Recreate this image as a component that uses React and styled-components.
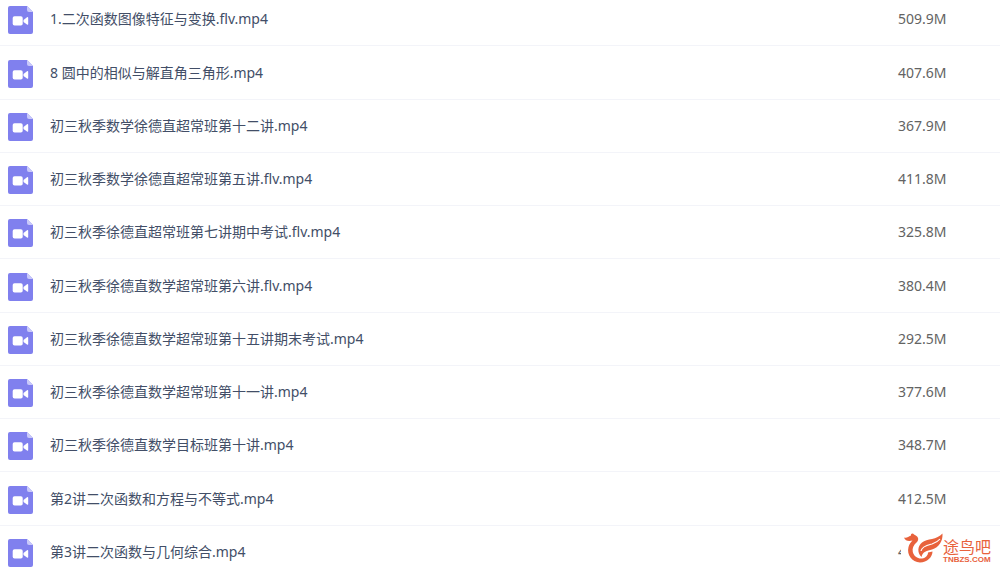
import React from 'react';

import styled, { createGlobalStyle } from 'styled-components';

const GlobalStyle = createGlobalStyle`
    body {
        margin: 0;
        background-color: #ffffff;
        font-family: "Noto Sans", "Noto Sans CJK SC", sans-serif;
        font-size: 14px;
    }
`

const Page = styled.main`
    position: relative;
    height: 100vh;
    overflow: hidden;
`

const FileList = styled.ul`
    margin: -7px 0 0;
    padding: 0;
    list-style: none;
`

const Row = styled.li`
    display: flex;
    align-items: center;
    box-sizing: border-box;
    height: 53px;
    padding: 0 8px;
    border-bottom: 1px solid #f3f4f9;

    &:nth-child(4n + 2) {
        height: 54px;
    }
`

const Icon = styled.svg`
    flex: none;
    width: 25px;
    height: 28px;
    margin: 2px 17px 0 0;
`

const Name = styled.span`
    flex: 1;
    line-height: 20px;
    color: #424e67;
    white-space: nowrap;
`

const Size = styled.span`
    width: 94px;
    line-height: 20px;
    color: #636363;
`

const Watermark = styled.div`
    position: absolute;
    right: 4px;
    bottom: 0;
    display: flex;
    align-items: center;
    width: 95px;
    height: 38px;
    background-color: #ffffff;
    color: #e8623c;
`

const Bird = styled.svg`
    flex: none;
    width: 42px;
    height: 36px;
`

const Brand = styled.div`
    display: flex;
    flex-direction: column;
    padding-top: 4px;
    white-space: nowrap;
`

const BrandName = styled.span`
    font-size: 16px;
    line-height: 18px;
`

const BrandSite = styled.span`
    font-family: "Liberation Sans", sans-serif;
    font-size: 8px;
    font-weight: bold;
    line-height: 8px;
`

const files = [
    { name: '1.二次函数图像特征与变换.flv.mp4', size: '509.9M' },
    { name: '8 圆中的相似与解直角三角形.mp4', size: '407.6M' },
    { name: '初三秋季数学徐德直超常班第十二讲.mp4', size: '367.9M' },
    { name: '初三秋季数学徐德直超常班第五讲.flv.mp4', size: '411.8M' },
    { name: '初三秋季徐德直超常班第七讲期中考试.flv.mp4', size: '325.8M' },
    { name: '初三秋季徐德直数学超常班第六讲.flv.mp4', size: '380.4M' },
    { name: '初三秋季徐德直数学超常班第十五讲期末考试.mp4', size: '292.5M' },
    { name: '初三秋季徐德直数学超常班第十一讲.mp4', size: '377.6M' },
    { name: '初三秋季徐德直数学目标班第十讲.mp4', size: '348.7M' },
    { name: '第2讲二次函数和方程与不等式.mp4', size: '412.5M' },
    { name: '第3讲二次函数与几何综合.mp4', size: '4' },
]

const VideoIcon = () => (
    <Icon viewBox="0 0 25 28" aria-hidden="true">
        <path d="M2 0H19L25 6V26a2 2 0 0 1-2 2H2a2 2 0 0 1-2-2V2a2 2 0 0 1 2-2z" fill="#8080ee" />
        <path d="M19 0L25 6H21a2 2 0 0 1-2-2z" fill="#c9c9fa" />
        <rect x="4.7" y="10.3" width="10" height="9.2" rx="1.8" fill="#ffffff" />
        <path d="M15.5 14L19 11.2Q20.2 10.6 20.2 12V18Q20.2 19.2 19 18.6L15.5 16z" fill="#ffffff" />
    </Icon>
)

const App = () => {
    return (
        <Page>
            <GlobalStyle />
            <FileList>
                {files.map((file) => (
                    <Row key={file.name}>
                        <VideoIcon />
                        <Name>{file.name}</Name>
                        <Size>{file.size}</Size>
                    </Row>
                ))}
            </FileList>
            <Watermark>
                <Bird viewBox="0 0 42 36" aria-hidden="true">
                    <path d="M3 6.5C6 7.5 7 5.500 10 4.500C9.500 2.500 12 1.500 13 3.500C17 5 18.500 8 16 11C12.500 14 11 17 11.800 21C13 25.500 17 28 21 27.500C25 27 27 24 27 21.500L31.500 20.500C31.500 26 26 31.500 19 31.500C11 31 5.500 24 7.500 16C8.200 13 10 11 11.500 9.500C8 10.500 4 10 3 6.500z" fill="currentColor" />
                    <path d="M20.500 26C16 22 16.500 15 21 11.500C26 7.500 36 9 41.500 2.500C42 10 38 16.500 31 18.500C26 20 21.500 20.500 20.500 26z" fill="currentColor" />
                    <path d="M20 20C21 15 27 14 31 13C34 12 37 10.500 39 8" fill="none" stroke="#ffffff" strokeWidth="1.2" />
                </Bird>
                <Brand>
                    <BrandName>途鸟吧</BrandName>
                    <BrandSite>TNBZS.COM</BrandSite>
                </Brand>
            </Watermark>
        </Page>
    )
}

export default App;
